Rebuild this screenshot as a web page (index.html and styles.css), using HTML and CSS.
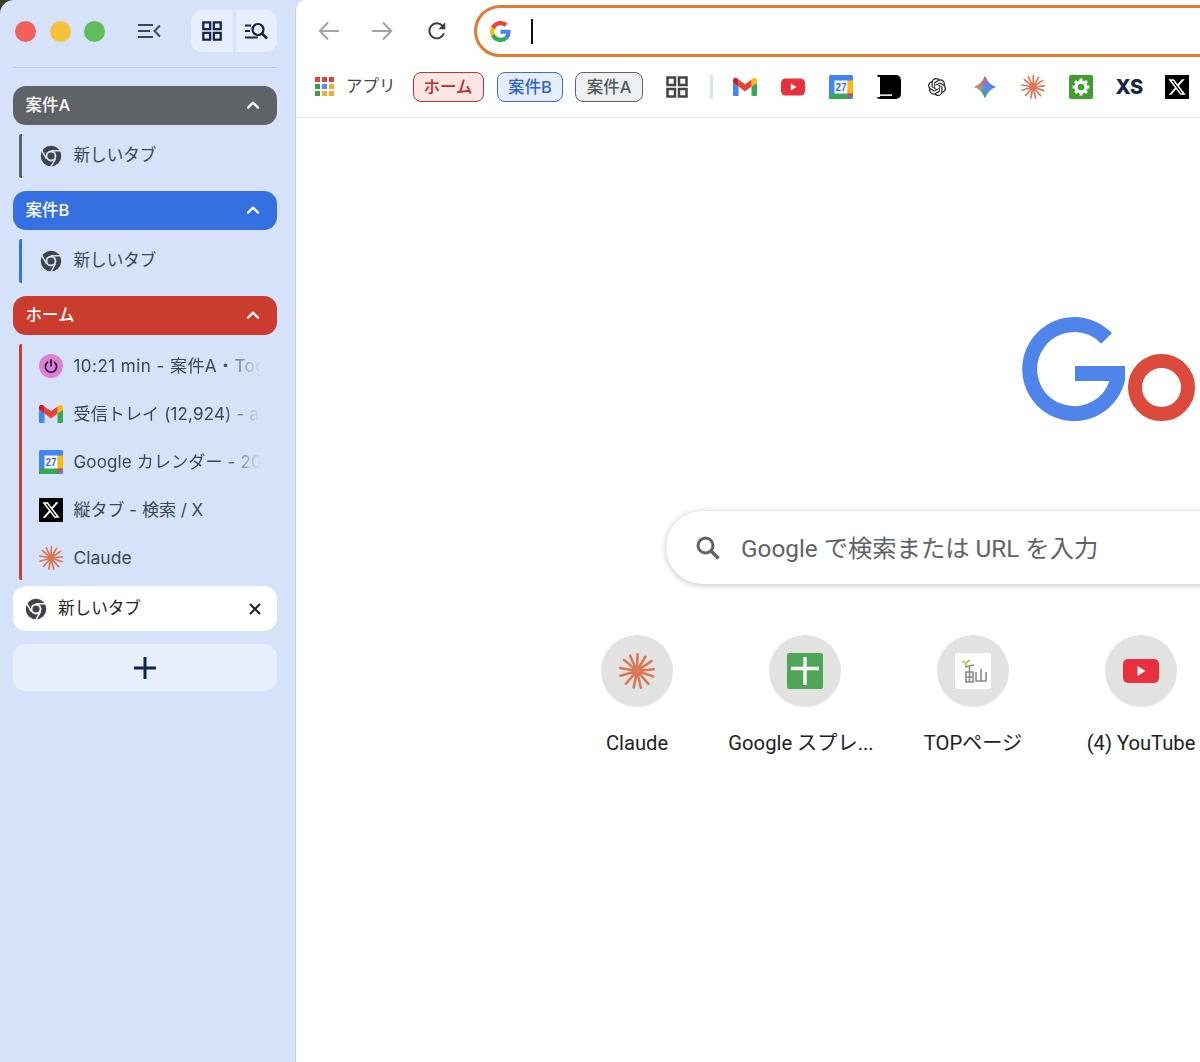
FILE: index.html
```html
<!DOCTYPE html>
<html lang="ja">
<head>
  <meta charset="UTF-8">
  <title>新しいタブ</title>
  <link rel="stylesheet" href="styles.css">
</head>
<body>
  <!-- shared icons -->
  <svg class="sprite" aria-hidden="true">
    <symbol id="i-chrome" viewBox="0 0 24 24">
      <circle cx="12" cy="12" r="11.2" fill="currentColor"/>
      <circle cx="12" cy="12" r="5.9" fill="var(--hole)"/>
      <circle cx="12" cy="12" r="3.9" fill="currentColor"/>
      <path d="M12 6.2H22.6M7 14.9L1.7 5.7M17 14.9L11.7 24" fill="none" stroke="var(--hole)" stroke-width="1.6"/>
    </symbol>
    <symbol id="i-gmail" viewBox="0 -3 24 24">
      <path fill="#4285f4" d="M1.6 18H5.5V8.5L0 4.4V16.4C0 17.3.7 18 1.6 18Z"/>
      <path fill="#34a853" d="M18.5 18h3.9c.9 0 1.6-.7 1.6-1.6V4.4l-5.5 4.1Z"/>
      <path fill="#fbbc04" d="M18.5 1.4V8.5L24 4.4V2.2C24 .2 21.7-.9 20.1.3Z"/>
      <path fill="#ea4335" d="M5.5 8.5V1.4L12 6.3l6.5-4.9V8.5L12 13.4Z"/>
      <path fill="#c5221f" d="M0 2.2V4.4L5.5 8.5V1.4L3.9.3C2.3-.9 0 .2 0 2.2Z"/>
    </symbol>
    <symbol id="i-calendar" viewBox="0 0 24 24">
      <rect width="24" height="24" rx="1.5" fill="#4285f4"/>
      <rect y="18.5" width="19" height="5.5" fill="#34a853"/>
      <rect x="18.5" y="5.5" width="5.5" height="13" fill="#fbbc04"/>
      <path d="M18.5 18.5H24L18.5 24Z" fill="#ea4335"/>
      <rect x="5.5" y="5.5" width="13" height="13" fill="#fff"/>
      <text x="12" y="16.4" text-anchor="middle" class="cal-num">27</text>
    </symbol>
    <symbol id="i-x" viewBox="0 0 24 24">
      <rect width="24" height="24" fill="#000"/>
      <path fill="#fff" transform="translate(2.4 2.4) scale(.8)" d="M18.244 2.25h3.308l-7.227 8.26 8.502 11.24H16.17l-5.214-6.817L4.99 21.75H1.68l7.73-8.835L1.254 2.25H8.08l4.713 6.231zm-1.161 17.52h1.833L7.084 4.126H5.117z"/>
    </symbol>
    <symbol id="i-claude" viewBox="0 0 24 24">
      <path fill="none" stroke="#d97757" stroke-width="1.7" stroke-linecap="round" d="M12 12L12.4 .8M12 12L17.6 2.4M12 12L21.6 5.4M12 12L23.2 10.8M12 12L22.8 15.6M12 12L19.6 20.6M12 12L14.6 23.2M12 12L9.8 23M12 12L4.6 20.4M12 12L1 15.2M12 12L.8 10M12 12L3.4 4.6M12 12L7.4 1.8"/>
    </symbol>
    <symbol id="i-power" viewBox="0 0 24 24">
      <circle cx="12" cy="12" r="12" fill="#dc7fd6"/>
      <path d="M8.6 8.2a5.6 5.6 0 1 0 6.8 0M12 5.8V12" fill="none" stroke="#2b1830" stroke-width="1.7" stroke-linecap="round"/>
    </symbol>
    <symbol id="i-grid" viewBox="0 0 24 24">
      <path fill="none" stroke="currentColor" stroke-width="2.5" d="M2.5 2.5h7.5v7.5H2.5zM14 2.5h7.5v7.5H14zM2.5 14h7.5v7.5H2.5zM14 14h7.5v7.5H14z"/>
    </symbol>
    <symbol id="i-chevron" viewBox="0 0 14 10">
      <path d="M2 7.6L7 2.6L12 7.6" fill="none" stroke="#fff" stroke-width="2.2" stroke-linecap="round" stroke-linejoin="round"/>
    </symbol>
  </svg>

  <div class="app">
    <!-- 縦タブ -->
    <aside class="sidebar">
      <div class="side-top">
        <div class="lights">
          <span class="light light-red"></span>
          <span class="light light-yellow"></span>
          <span class="light light-green"></span>
        </div>
        <svg class="collapse" viewBox="0 0 24 16">
          <path d="M1 2H16M1 8H13M1 14H16M23 2.5L17.5 8L23 13.5" fill="none" stroke="#3c4654" stroke-width="2"/>
        </svg>
        <div class="view-switch">
          <span class="view-btn"><svg class="view-grid"><use href="#i-grid"/></svg></span>
          <span class="view-btn">
            <svg class="view-icon" viewBox="0 0 24 24">
              <path d="M1 6.5H7M1 12H6M1 18.5H14" fill="none" stroke="#12234f" stroke-width="2"/>
              <circle cx="14" cy="10.5" r="5.5" fill="none" stroke="#12234f" stroke-width="2.2"/>
              <path d="M18 14.5L23 19.5" stroke="#12234f" stroke-width="2.6"/>
            </svg>
          </span>
        </div>
      </div>
      <div class="side-line"></div>

      <section class="group group-grey">
        <div class="group-head"><span class="head-title">案件A</span><svg class="chev"><use href="#i-chevron"/></svg></div>
        <div class="group-tabs">
          <div class="tab"><svg class="tab-icon chrome"><use href="#i-chrome"/></svg><span class="tab-title kana">新しいタブ</span></div>
        </div>
      </section>

      <section class="group group-blue">
        <div class="group-head"><span class="head-title">案件B</span><svg class="chev"><use href="#i-chevron"/></svg></div>
        <div class="group-tabs">
          <div class="tab"><svg class="tab-icon chrome"><use href="#i-chrome"/></svg><span class="tab-title kana">新しいタブ</span></div>
        </div>
      </section>

      <section class="group group-red">
        <div class="group-head"><span class="head-title">ホーム</span><svg class="chev"><use href="#i-chevron"/></svg></div>
        <div class="group-tabs">
          <div class="tab"><svg class="tab-icon"><use href="#i-power"/></svg><span class="tab-title fade wide">10:21 min - 案件A・Toggl Track</span></div>
          <div class="tab"><svg class="tab-icon"><use href="#i-gmail"/></svg><span class="tab-title fade wider">受信トレイ (12,924) - account</span></div>
          <div class="tab"><svg class="tab-icon"><use href="#i-calendar"/></svg><span class="tab-title fade wider">Google カレンダー - 2025年</span></div>
          <div class="tab"><svg class="tab-icon"><use href="#i-x"/></svg><span class="tab-title">縦タブ - 検索 / X</span></div>
          <div class="tab"><svg class="tab-icon"><use href="#i-claude"/></svg><span class="tab-title latin">Claude</span></div>
        </div>
      </section>

      <div class="active-tab">
        <svg class="tab-icon chrome"><use href="#i-chrome"/></svg>
        <span class="active-title">新しいタブ</span>
        <svg class="close" viewBox="0 0 12 12"><path d="M1 1L11 11M11 1L1 11" stroke="#222" stroke-width="2"/></svg>
      </div>
      <div class="new-tab">
        <svg class="plus" viewBox="0 0 22 22"><path d="M0 11H22M11 0V22" stroke="#12234f" stroke-width="3"/></svg>
      </div>
    </aside>

    <main class="main">
      <div class="toolbar">
        <svg class="nav-icon" viewBox="0 0 24 24"><path d="M22 12H3M11 3.5L2.8 12L11 20.5" fill="none" stroke="#a3a3a3" stroke-width="2"/></svg>
        <svg class="nav-icon" viewBox="0 0 24 24"><path d="M2 12H21M13 3.5L21.2 12L13 20.5" fill="none" stroke="#a3a3a3" stroke-width="2"/></svg>
        <svg class="nav-icon reload" viewBox="0 0 24 24"><path d="M19.6 14.5A8.2 8.2 0 1 1 18 6.4L20.5 9" fill="none" stroke="#3c3c3c" stroke-width="2.1"/><path d="M21 2.5V10H13.5Z" fill="#3c3c3c"/></svg>
        <div class="omnibox">
          <svg class="g-icon" viewBox="0 0 48 48">
            <path fill="#ea4335" d="M24 9.5c3.54 0 6.71 1.22 9.21 3.6l6.85-6.85C35.9 2.38 30.47 0 24 0 14.62 0 6.51 5.38 2.56 13.22l7.98 6.19C12.43 13.72 17.74 9.5 24 9.5z"/>
            <path fill="#4285f4" d="M46.98 24.55c0-1.57-.15-3.09-.38-4.55H24v9.02h12.94c-.58 2.96-2.26 5.48-4.78 7.18l7.73 6c4.51-4.18 7.09-10.36 7.09-17.65z"/>
            <path fill="#fbbc05" d="M10.53 28.59c-.48-1.45-.76-2.99-.76-4.59s.27-3.14.76-4.59l-7.98-6.19C.92 16.46 0 20.12 0 24c0 3.88.92 7.54 2.56 10.78l7.97-6.19z"/>
            <path fill="#34a853" d="M24 48c6.48 0 11.93-2.13 15.89-5.81l-7.73-6c-2.15 1.45-4.92 2.3-8.16 2.3-6.26 0-11.57-4.22-13.47-9.91l-7.98 6.19C6.51 42.62 14.62 48 24 48z"/>
          </svg>
          <span class="caret"></span>
        </div>
      </div>

      <div class="bookmarks">
        <div class="apps-grid">
          <i class="r"></i><i class="r"></i><i class="r"></i>
          <i class="g"></i><i class="b"></i><i class="y"></i>
          <i class="g"></i><i class="y"></i><i class="y"></i>
        </div>
        <span class="apps-label">アプリ</span>
        <span class="chip chip-red"><span class="chip-text">ホーム</span></span>
        <span class="chip chip-blue"><span class="chip-text">案件B</span></span>
        <span class="chip chip-grey"><span class="chip-text">案件A</span></span>
        <svg class="bm-grid"><use href="#i-grid"/></svg>
        <span class="bm-sep"></span>
        <div class="bm-icons">
          <svg class="bm-icon"><use href="#i-gmail"/></svg>
          <svg class="bm-icon" viewBox="0 0 24 24"><rect y="3.5" width="24" height="17" rx="4.5" fill="#e8303f"/><path d="M9.8 8.6L15.6 12L9.8 15.4Z" fill="#fff"/></svg>
          <svg class="bm-icon"><use href="#i-calendar"/></svg>
          <svg class="bm-icon" viewBox="0 0 24 24">
            <path d="M0 0H19A5 5 0 0 1 24 5V19A5 5 0 0 1 19 24H3C1 24 0 23 0 22H3V2H1Z" fill="#000"/>
            <rect x="3" y="19.4" width="12" height="1.5" fill="#fff"/>
          </svg>
          <svg class="bm-icon" viewBox="-4 -4 32 32">
            <path fill="#222" d="M22.2819 9.8211a5.9847 5.9847 0 0 0-.5157-4.9108 6.0462 6.0462 0 0 0-6.5098-2.9A6.0651 6.0651 0 0 0 4.9807 4.1818a5.9847 5.9847 0 0 0-3.9977 2.9 6.0462 6.0462 0 0 0 .7427 7.0966 5.98 5.98 0 0 0 .511 4.9107 6.051 6.051 0 0 0 6.5146 2.9001A5.9847 5.9847 0 0 0 13.2599 24a6.0557 6.0557 0 0 0 5.7718-4.2058 5.9894 5.9894 0 0 0 3.9977-2.9001 6.0557 6.0557 0 0 0-.7475-7.0729zm-9.022 12.6081a4.4755 4.4755 0 0 1-2.8764-1.0408l.1419-.0804 4.7783-2.7582a.7948.7948 0 0 0 .3927-.6813v-6.7369l2.02 1.1686a.071.071 0 0 1 .038.052v5.5826a4.504 4.504 0 0 1-4.4945 4.4944zm-9.6607-4.1254a4.4708 4.4708 0 0 1-.5346-3.0137l.142.0852 4.783 2.7582a.7712.7712 0 0 0 .7806 0l5.8428-3.3685v2.3324a.0804.0804 0 0 1-.0332.0615L9.74 19.9502a4.4992 4.4992 0 0 1-6.1408-1.6464zM2.3408 7.8956a4.485 4.485 0 0 1 2.3655-1.9728V11.6a.7664.7664 0 0 0 .3879.6765l5.8144 3.3543-2.0201 1.1685a.0757.0757 0 0 1-.071 0l-4.8303-2.7865A4.504 4.504 0 0 1 2.3408 7.872zm16.5963 3.8558L13.1038 8.364 15.1192 7.2a.0757.0757 0 0 1 .071 0l4.8303 2.7913a4.4944 4.4944 0 0 1-.6765 8.1042v-5.6772a.79.79 0 0 0-.407-.667zm2.0107-3.0231l-.142-.0852-4.7735-2.7818a.7759.7759 0 0 0-.7854 0L9.409 9.2297V6.8974a.0662.0662 0 0 1 .0284-.0615l4.8303-2.7866a4.4992 4.4992 0 0 1 6.6802 4.66zM8.3065 12.863l-2.02-1.1638a.0804.0804 0 0 1-.038-.0567V6.0742a4.4992 4.4992 0 0 1 7.3757-3.4537l-.142.0805L8.704 5.459a.7948.7948 0 0 0-.3927.6813zm1.0976-2.3654l2.602-1.4998 2.6069 1.4998v2.9994l-2.5974 1.4997-2.6067-1.4997Z"/>
          </svg>
          <svg class="bm-icon" viewBox="0 0 24 24">
            <defs>
              <linearGradient id="gem" x1="1" y1="12" x2="23" y2="12" gradientUnits="userSpaceOnUse">
                <stop offset="0" stop-color="#f4b22e"/>
                <stop offset=".5" stop-color="#5b8df0"/>
                <stop offset="1" stop-color="#4285f4"/>
              </linearGradient>
              <linearGradient id="gem-top" x1="9" y1="2" x2="14" y2="11" gradientUnits="userSpaceOnUse">
                <stop offset="0" stop-color="#e2504a"/>
                <stop offset="1" stop-color="#e2504a" stop-opacity="0"/>
              </linearGradient>
              <linearGradient id="gem-low" x1="12" y1="13" x2="12" y2="23" gradientUnits="userSpaceOnUse">
                <stop offset="0" stop-color="#34a853" stop-opacity="0"/>
                <stop offset="1" stop-color="#34a853"/>
              </linearGradient>
            </defs>
            <path d="M12 1Q15 9 23 12Q15 15 12 23Q9 15 1 12Q9 9 12 1Z" fill="url(#gem)"/>
            <path d="M12 1Q15 9 23 12Q15 15 12 23Q9 15 1 12Q9 9 12 1Z" fill="url(#gem-top)"/>
            <path d="M12 1Q15 9 23 12Q15 15 12 23Q9 15 1 12Q9 9 12 1Z" fill="url(#gem-low)"/>
          </svg>
          <svg class="bm-icon"><use href="#i-claude"/></svg>
          <svg class="bm-icon" viewBox="0 0 24 24">
            <rect width="24" height="24" rx="2" fill="#3f9e2f"/>
            <circle cx="12" cy="12" r="5" fill="none" stroke="#fff" stroke-width="3.4"/>
            <path d="M12 3.6V20.4M3.6 12H20.4M6 6L18 18M18 6L6 18" stroke="#fff" stroke-width="3" stroke-dasharray="3.4 10"/>
          </svg>
          <span class="bm-icon bm-xs">XS</span>
          <svg class="bm-icon"><use href="#i-x"/></svg>
        </div>
      </div>

      <div class="ntp">
        <svg class="logo" viewBox="0 0 178 104" role="img" aria-label="Google">
          <path d="M84.5 21.5A44.5 44.5 0 1 0 96 60" fill="none" stroke="#4f85ea" stroke-width="15"/>
          <rect x="53" y="49" width="50" height="15" fill="#4f85ea"/>
          <circle cx="139.5" cy="70.5" r="26.5" fill="none" stroke="#db4a3a" stroke-width="14"/>
        </svg>

        <div class="search">
          <svg class="search-icon" viewBox="0 0 24 24"><circle cx="9.5" cy="9.5" r="7.5" fill="none" stroke="#5f6368" stroke-width="3"/><path d="M15 15L22.5 22.5" stroke="#5f6368" stroke-width="3.4"/></svg>
          <span class="search-text">Google で検索または URL を入力</span>
        </div>

        <div class="tiles">
          <div class="tile">
            <span class="tile-circle"><svg class="tile-icon"><use href="#i-claude"/></svg></span>
            <span class="tile-label">Claude</span>
          </div>
          <div class="tile">
            <span class="tile-circle">
              <svg class="tile-icon" viewBox="0 0 36 36"><rect width="36" height="36" rx="2.5" fill="#4fa657"/><path d="M4 15.5H32M18 4V32" stroke="#fff" stroke-width="3.4"/></svg>
            </span>
            <span class="tile-label clipped">Google スプレ...</span>
          </div>
          <div class="tile">
            <span class="tile-circle">
              <svg class="tile-icon" viewBox="0 0 36 36">
                <rect width="36" height="36" rx="3" fill="#fff"/>
                <path d="M10 14L19 12M11 19H18V29H11ZM11 24H18M14.5 14V29M21 19V28H31V19M26 16V28" fill="none" stroke="#8a8a8a" stroke-width="1.6"/>
                <path d="M7 8L11 10M15 7L11 10V13" fill="none" stroke="#b5c84a" stroke-width="1.8"/>
              </svg>
            </span>
            <span class="tile-label">TOPページ</span>
          </div>
          <div class="tile">
            <span class="tile-circle">
              <svg class="tile-icon" viewBox="0 0 36 36"><rect y="6" width="36" height="24" rx="5" fill="#e8303f"/><path d="M14.5 13L22.5 18L14.5 23Z" fill="#fff"/></svg>
            </span>
            <span class="tile-label">(4) YouTube</span>
          </div>
        </div>
      </div>
    </main>
  </div>
</body>
</html>
```

FILE: styles.css
```css
* {
  box-sizing: border-box;
}
html, body {
  margin: 0;
  height: 100%;
  overflow: hidden;
}
body {
  background-color: #3a3c22;
  font-family: Inter, "Noto Sans CJK JP", sans-serif;
  color: #3c4654;
}
.sprite {
  width: 0;
  height: 0;
  display: block;
}
.cal-num {
  font-family: "Liberation Sans", sans-serif;
  font-size: 10px;
  fill: #3b6fc9;
  font-weight: 700;
}

.app {
  display: flex;
  width: 1200px;
  height: 1062px;
  background-color: #d5e2fa;
  border-top-left-radius: 14px;
  overflow: hidden;
}

/* sidebar */
.sidebar {
  flex: 0 0 295px;
  padding: 10px 18px 0 13px;
  --hole: #d5e2fa;
}
.side-top {
  display: flex;
  align-items: center;
  height: 42px;
}
.lights {
  display: flex;
  gap: 13.5px;
  margin-left: 2px;
}
.light {
  width: 21px;
  height: 21px;
  border-radius: 50%;
}
.light-red { background-color: #f2605c; }
.light-yellow { background-color: #f6c23c; }
.light-green { background-color: #5fbe5b; }
.collapse {
  width: 24px;
  height: 16px;
  margin-left: 32px;
}
.view-switch {
  display: flex;
  gap: 3px;
  margin-left: auto;
}
.view-btn {
  display: flex;
  align-items: center;
  justify-content: center;
  width: 41.5px;
  height: 42px;
  background-color: #e8effc;
  color: #12234f;
}
.view-btn:first-child {
  border-radius: 11px 0 0 11px;
}
.view-btn:last-child {
  border-radius: 0 11px 11px 0;
}
.view-grid {
  width: 22px;
  height: 22px;
}
.view-icon {
  width: 24px;
  height: 24px;
}
.side-line {
  height: 1px;
  margin: 15px 0 17.5px;
  background-color: #b6caf3;
}

.group {
  margin-bottom: 13px;
}
.group-grey { --accent: #5f6368; }
.group-blue { --accent: #3570e0; }
.group-red { --accent: #c93c2e; margin-bottom: 6.5px; }
.group-head {
  display: flex;
  align-items: center;
  justify-content: space-between;
  height: 39px;
  padding: 0 17px 0 12.5px;
  background-color: var(--accent);
  border-radius: 13px;
  color: #fff;
  font-size: 16.5px;
  font-weight: 500;
}
.head-title {
  padding-bottom: 3px;
}
.chev {
  width: 14px;
  height: 10px;
}
.group-tabs {
  display: flex;
  flex-direction: column;
  gap: 4px;
  margin: 9px 0 0 6px;
  border-left: 3px solid var(--accent);
  border-radius: 2px;
  overflow: hidden;
}
.tab {
  display: flex;
  align-items: center;
  height: 44px;
  padding-left: 17px;
}
.tab-icon {
  flex: none;
  width: 24px;
  height: 24px;
  color: #3f4448;
}
.chrome {
  width: 22px;
  height: 22px;
  margin: 0 1px;
}
.tab-title {
  margin-left: 10.5px;
  width: 187px;
  padding-bottom: 3px;
  font-size: 17px;
  white-space: nowrap;
  overflow: hidden;
}
.kana { font-size: 16.6px; }
.latin { font-size: 17.5px; padding-bottom: 0; }
.wide { letter-spacing: .45px; }
.wider { letter-spacing: .15px; }
.fade {
  -webkit-mask-image: linear-gradient(to right, #000 150px, transparent 187px);
  mask-image: linear-gradient(to right, #000 150px, transparent 187px);
}

.active-tab {
  display: flex;
  align-items: center;
  height: 45px;
  padding: 0 16px 0 11px;
  background-color: #fff;
  border-radius: 13px;
  color: #222;
  --hole: #fff;
}
.active-title {
  margin-left: 10px;
  padding-bottom: 3px;
  font-size: 16.6px;
}
.close {
  width: 12px;
  height: 12px;
  margin-left: auto;
}
.new-tab {
  display: flex;
  align-items: center;
  justify-content: center;
  height: 47px;
  margin-top: 13px;
  background-color: #e8effc;
  border-radius: 13px;
}
.plus {
  width: 22px;
  height: 22px;
}

/* main */
.main {
  flex: 1;
  min-width: 0;
  background-color: #fff;
  border-left: 1px solid #c3d2ef;
  border-top-left-radius: 10px;
  overflow: hidden;
}
.toolbar {
  display: flex;
  align-items: center;
  height: 62px;
  padding-left: 21px;
}
.nav-icon {
  flex: none;
  width: 24px;
  height: 24px;
  margin-right: 29px;
}
.reload {
  width: 22px;
  height: 22px;
  margin-left: 3px;
  margin-right: 26px;
}
.omnibox {
  flex: none;
  display: flex;
  align-items: center;
  width: 900px;
  height: 52px;
  padding-left: 13px;
  border: 3px solid #e07b2f;
  border-radius: 26px;
}
.g-icon {
  width: 21px;
  height: 21px;
}
.caret {
  width: 2px;
  height: 25px;
  margin-left: 20px;
  background-color: #111;
}

.bookmarks {
  display: flex;
  align-items: center;
  height: 56px;
  padding: 0 0 6px 19px;
  border-bottom: 1px solid #e3e3e3;
  overflow: hidden;
}
.apps-grid {
  flex: none;
  display: grid;
  grid-template-columns: repeat(3, 5px);
  gap: 2px;
}
.apps-grid i {
  height: 5px;
}
.apps-grid .r { background-color: #d9453a; }
.apps-grid .g { background-color: #3f9a4f; }
.apps-grid .b { background-color: #4c8bf0; }
.apps-grid .y { background-color: #eeac34; }
.apps-label {
  flex: none;
  margin: 0 17px 0 12px;
  padding-bottom: 3px;
  font-size: 16.5px;
  color: #444;
}
.chip {
  flex: none;
  display: flex;
  align-items: center;
  height: 30px;
  padding: 0 10.5px;
  margin-right: 12px;
  border: 1.5px solid;
  border-radius: 8px;
  font-size: 16.5px;
  font-weight: 500;
}
.chip-text {
  padding-bottom: 2px;
}
.chip-red { color: #b5302a; border-color: #b5392f; background-color: #fbe6e4; padding: 0 10px; margin-right: 13px; }
.chip-blue { color: #2f64d0; border-color: #3a6fd8; background-color: #e6eefb; }
.chip-grey { color: #55585c; border-color: #5f6368; background-color: #eff0f2; }
.bm-grid {
  flex: none;
  width: 24px;
  height: 24px;
  margin-left: 10px;
  color: #444;
}
.bm-sep {
  flex: none;
  width: 3px;
  height: 24px;
  margin: 0 20px 0 21px;
  background-color: #d5e2fa;
}
.bm-icons {
  flex: none;
  display: flex;
  align-items: center;
  gap: 24px;
}
.bm-icon {
  flex: none;
  width: 24px;
  height: 24px;
}
.bm-xs {
  display: flex;
  align-items: center;
  justify-content: center;
  font-size: 20px;
  font-weight: 800;
  color: #1b2540;
  letter-spacing: -.5px;
}

/* new tab page */
.ntp {
  padding-top: 199px;
  width: 1400px;
}
.logo {
  display: block;
  width: 178px;
  height: 104px;
  margin-left: 726px;
}
.search {
  display: flex;
  align-items: center;
  width: 900px;
  height: 73px;
  margin: 90px 0 0 370px;
  padding-left: 30px;
  background-color: #fff;
  border-radius: 37px;
  box-shadow: 0 1px 6px rgba(32, 33, 36, 0.28);
}
.search-icon {
  width: 24px;
  height: 24px;
}
.search-text {
  margin-left: 21px;
  padding-bottom: 3px;
  font-family: Roboto, "Noto Sans CJK JP", sans-serif;
  font-size: 24.3px;
  color: #5f6368;
  white-space: nowrap;
}
.tiles {
  display: flex;
  margin: 51px 0 0 257px;
}
.tile {
  flex: 0 0 168px;
  display: flex;
  flex-direction: column;
  align-items: center;
}
.tile-circle {
  display: flex;
  align-items: center;
  justify-content: center;
  width: 72px;
  height: 72px;
  background-color: #e2e2e1;
  border-radius: 50%;
}
.tile-icon {
  width: 36px;
  height: 36px;
}
.tile-label {
  margin-top: 24px;
  font-family: Roboto, "Noto Sans CJK JP", sans-serif;
  font-size: 20.2px;
  line-height: 24px;
  color: #222;
  white-space: nowrap;
}
.clipped {
  margin-right: 8px;
}
```
